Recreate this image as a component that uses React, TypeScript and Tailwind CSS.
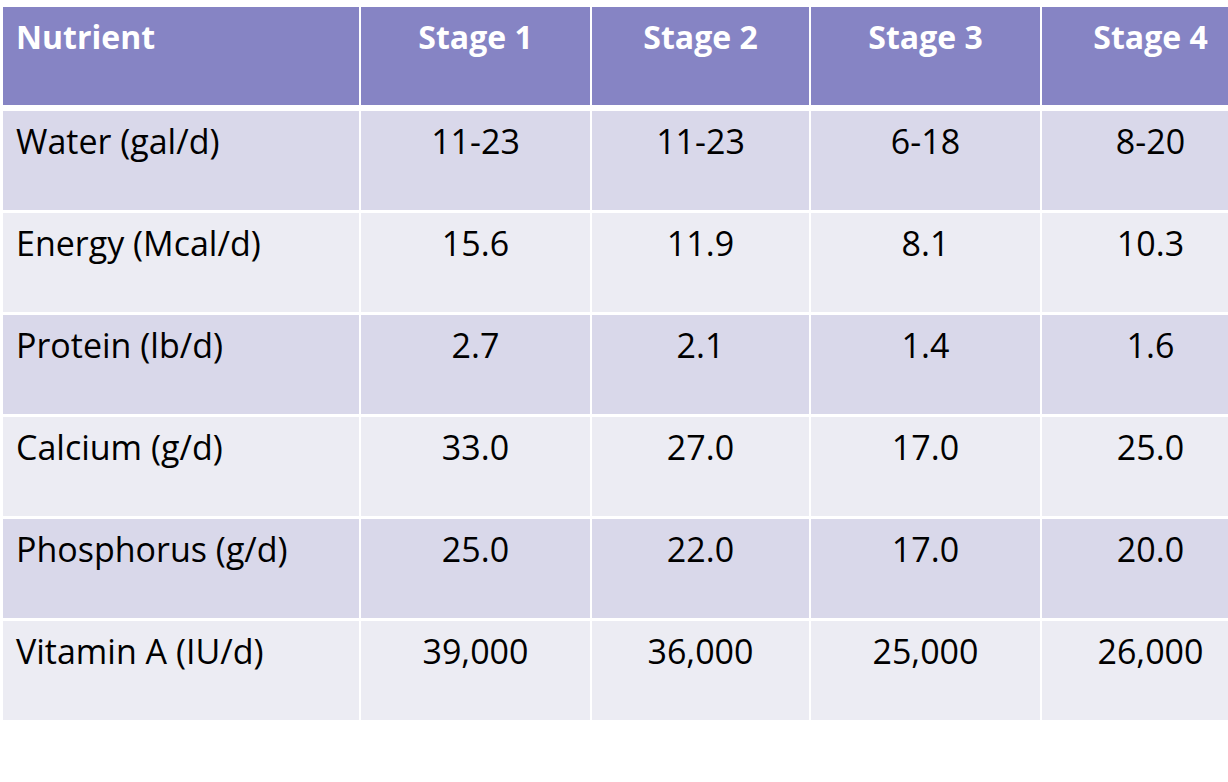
import React from "react";

const stages = ["Stage 1", "Stage 2", "Stage 3", "Stage 4"];

const rows: [string, string, string, string, string][] = [
  ["Water (gal/d)", "11-23", "11-23", "6-18", "8-20"],
  ["Energy (Mcal/d)", "15.6", "11.9", "8.1", "10.3"],
  ["Protein (lb/d)", "2.7", "2.1", "1.4", "1.6"],
  ["Calcium (g/d)", "33.0", "27.0", "17.0", "25.0"],
  ["Phosphorus (g/d)", "25.0", "22.0", "17.0", "20.0"],
  ["Vitamin A (IU/d)", "39,000", "36,000", "25,000", "26,000"],
];

const cols = "grid grid-cols-[356px_229px_217px_229px_217px] gap-x-[2px]";

export default function App() {
  return (
    <div className="h-screen w-full overflow-hidden bg-white font-['Open_Sans',sans-serif]">
      <div className="ml-[3px] mt-[7px] flex w-[1256px] flex-col">
        {/* Header */}
        <div className={`${cols} h-[98px]`}>
          {["Nutrient", ...stages].map((h, i) => (
            <div
              key={h}
              className={`bg-[#8684c4] pt-[14px] text-[32px] font-bold leading-none text-white ${
                i === 0 ? "pl-[13px] text-left" : "text-center"
              }`}
            >
              {h}
            </div>
          ))}
        </div>

        {/* Body */}
        <div className="mt-[6px] flex flex-col gap-y-[3px]">
          {rows.map((r, ri) => (
            <div key={r[0]} className={`${cols} h-[99px]`}>
              {r.map((c, ci) => (
                <div
                  key={ci}
                  className={`${
                    ri % 2 === 0 ? "bg-[#d9d8ea]" : "bg-[#ececf3]"
                  } pt-[13px] text-[34px] leading-none text-black ${
                    ci === 0 ? "pl-[13px] text-left" : "text-center"
                  }`}
                >
                  {c}
                </div>
              ))}
            </div>
          ))}
        </div>
      </div>
    </div>
  );
}
